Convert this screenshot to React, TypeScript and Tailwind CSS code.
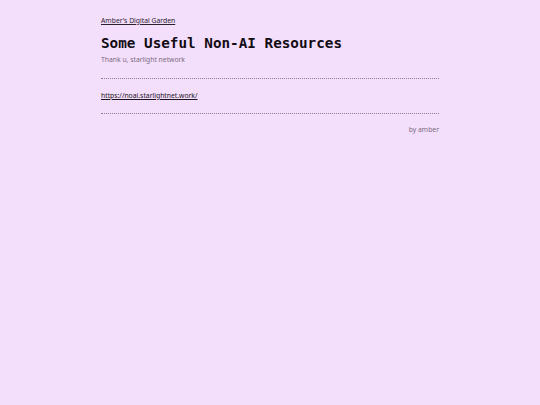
export default function App() {
  return (
    <div className="min-h-screen bg-[#f3defb] text-[#1c1420]">
      <div className="mx-auto w-[338px] pt-[16px] font-['Noto_Sans',sans-serif] text-[6.8px] leading-[10px]">
        <a href="#" className="block w-fit underline text-[#2a2030]">
          Amber&apos;s Digital Garden
        </a>
        <h1 className="mt-[8px] font-['DejaVu_Sans_Mono',monospace] text-[14.3px] font-bold leading-[18px] text-[#120c14]">
          Some Useful Non-AI Resources
        </h1>
        <p className="mt-[3px] text-[#7b6d80]">Thank u, starlight network</p>
        <div className="mt-[13px] border-t border-dotted border-[#8e7f94]" />
        <div className="pt-[12px] pb-[12px]">
          <a href="#" className="block w-fit underline text-[#1c1420]">
            https://noai.starlightnet.work/
          </a>
        </div>
        <div className="border-t border-dotted border-[#8e7f94]" />
        <p className="mt-[11px] text-right text-[#7b6d80]">by amber</p>
      </div>
    </div>
  );
}
